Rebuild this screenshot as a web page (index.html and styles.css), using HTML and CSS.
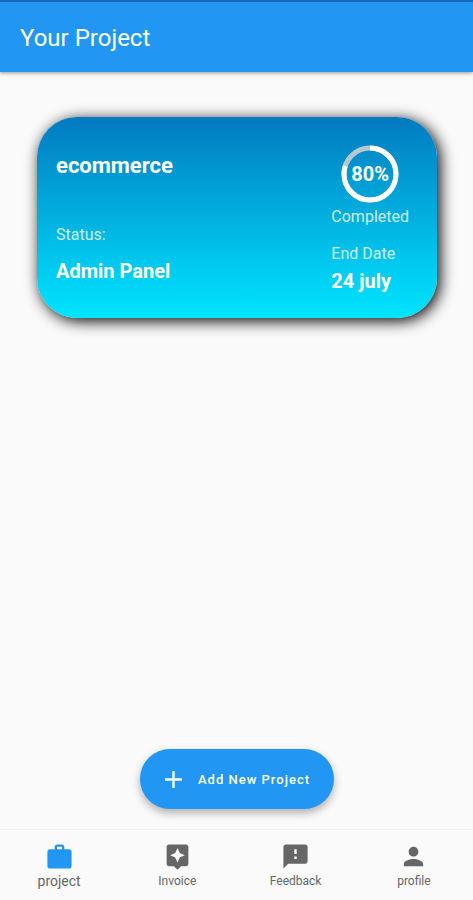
FILE: index.html
```html
<!DOCTYPE html>
<html lang="en">
<head>
  <meta charset="UTF-8" />
  <meta name="viewport" content="width=device-width, initial-scale=1.0" />
  <title>Your Project</title>
  <link rel="stylesheet" href="styles.css">
</head>
<body>
  <header class="app-bar">
    <h1>Your Project</h1>
  </header>

  <main>
    <article class="card">
      <div class="card-info">
        <h2>ecommerce</h2>
        <p class="label">Status:</p>
        <p class="value">Admin Panel</p>
      </div>
      <div class="card-side">
        <div class="progress">
          <svg viewBox="0 0 58 58" aria-hidden="true">
            <circle class="track" cx="29" cy="29" r="26" />
            <circle class="bar" cx="29" cy="29" r="26" pathLength="100" stroke-dasharray="80 100" transform="rotate(-90 29 29)" />
          </svg>
          <span class="percent">80%</span>
        </div>
        <p class="label">Completed</p>
        <p class="label end-label">End Date</p>
        <p class="value">24 july</p>
      </div>
    </article>

    <button type="button" class="add-btn">
      <svg viewBox="0 0 24 24" aria-hidden="true"><path d="M19 13h-6v6h-2v-6H5v-2h6V5h2v6h6v2z" /></svg>
      Add New Project
    </button>
  </main>

  <nav class="bottom-nav">
    <a href="#project" class="active">
      <svg viewBox="0 0 24 24" aria-hidden="true"><path d="M20 6h-4V4c0-1.110-.890-2-2-2h-4c-1.110 0-2 .890-2 2v2H4c-1.110 0-1.990.890-1.990 2L2 20c0 1.110.890 2 2 2h16c1.110 0 2-.890 2-2V8c0-1.110-.890-2-2-2zm-6 0h-4V4h4v2z" /></svg>
      <span>project</span>
    </a>
    <a href="#invoice">
      <svg viewBox="0 0 24 24" aria-hidden="true"><path d="M19 2H5c-1.100 0-2 .900-2 2v14c0 1.100.900 2 2 2h4l3 3 3-3h4c1.100 0 2-.900 2-2V4c0-1.100-.900-2-2-2zm-5.120 10.880L12 17l-1.880-4.120L6 11l4.120-1.880L12 5l1.880 4.120L18 11l-4.120 1.880z" /></svg>
      <span>Invoice</span>
    </a>
    <a href="#feedback">
      <svg viewBox="0 0 24 24" aria-hidden="true"><path d="M20 2H4c-1.100 0-1.990.900-1.990 2L2 22l4-4h14c1.100 0 2-.900 2-2V4c0-1.100-.900-2-2-2zm-7 12h-2v-2h2v2zm0-4h-2V6h2v4z" /></svg>
      <span>Feedback</span>
    </a>
    <a href="#profile">
      <svg viewBox="0 0 24 24" aria-hidden="true"><path d="M12 12c2.210 0 4-1.790 4-4s-1.790-4-4-4-4 1.790-4 4 1.790 4 4 4zm0 2c-2.670 0-8 1.340-8 4v2h16v-2c0-2.660-5.330-4-8-4z" /></svg>
      <span>profile</span>
    </a>
  </nav>
</body>
</html>
```

FILE: styles.css
```css
* {
  box-sizing: border-box;
}
body {
  font-family: Roboto, "Liberation Sans", sans-serif;
  margin: 0;
  min-height: 100vh;
  display: flex;
  flex-direction: column;
  background: #fafafa;
}
h1, h2, p {
  margin: 0;
}
.app-bar {
  padding: 21px 20px 18px;
  background: #2196f3;
  border-top: 2px solid #1769b5;
  box-shadow: 0 1px 4px rgba(0, 0, 0, 0.4);
}
.app-bar h1 {
  color: #fff;
  font-size: 24px;
  font-weight: 400;
  line-height: 31px;
}
main {
  flex: 1;
  display: flex;
  flex-direction: column;
  padding: 45px 36px 20px 37px;
}

/* Project card */
.card {
  display: flex;
  justify-content: space-between;
  padding: 28px 28px 25px 19px;
  border-radius: 40px;
  color: #fff;
  background: linear-gradient(#027ac0, #00e5ff);
  box-shadow: 3px 3px 15px #000;
}
.card-info {
  padding-top: 8px;
}
.card h2 {
  font-size: 22px;
  line-height: 26px;
  margin-bottom: 46px;
}
.label {
  font-size: 16px;
  line-height: 20px;
  color: rgba(255, 255, 255, 0.8);
}
.value {
  font-size: 20px;
  font-weight: 700;
  line-height: 24px;
}
.card-info .value {
  margin-top: 14px;
}
.end-label {
  margin: 17px 0 5px;
}
.progress {
  display: grid;
  place-items: center;
  width: 58px;
  height: 58px;
  margin: 0 auto 4px;
}
.progress svg, .percent {
  grid-area: 1 / 1;
}
.progress svg {
  width: 58px;
  height: 58px;
}
.progress circle {
  fill: none;
  stroke-width: 5;
}
.track {
  stroke: #b8c7ce;
}
.bar {
  stroke: #fff;
}
.percent {
  font-size: 20px;
  font-weight: 700;
}

.add-btn {
  display: flex;
  align-items: center;
  gap: 10px;
  align-self: center;
  margin-top: auto;
  height: 60px;
  padding: 0 24px 0 19px;
  border: none;
  border-radius: 30px;
  background: #2196f3;
  color: #fff;
  font-family: inherit;
  font-size: 13px;
  font-weight: 500;
  letter-spacing: 1px;
  cursor: pointer;
  box-shadow: 0 4px 8px rgba(0, 0, 0, 0.3);
}
.add-btn svg {
  width: 29px;
  height: 29px;
  fill: #fff;
}

/* Bottom navigation */
.bottom-nav {
  display: flex;
  border-top: 1px solid #f0f0f0;
}
.bottom-nav a {
  flex: 1;
  display: flex;
  flex-direction: column;
  align-items: center;
  height: 70px;
  padding-top: 12px;
  color: #666;
  font-size: 12px;
  text-decoration: none;
}
.bottom-nav svg {
  width: 29px;
  height: 29px;
  fill: #666;
}
.bottom-nav span {
  line-height: 20px;
}
.bottom-nav .active {
  font-size: 14px;
}
.bottom-nav .active svg {
  fill: #2196f3;
}
```
